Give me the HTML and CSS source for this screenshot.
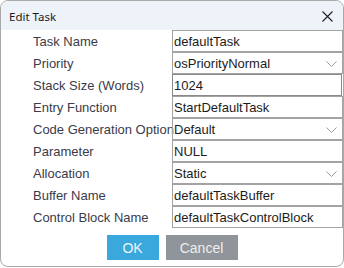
FILE: index.html
```html
<!DOCTYPE html>
<html lang="en">

<head>
    <meta charset="utf-8">
    <meta name="viewport" content="width=device-width, initial-scale=1.0">
    <title>Edit Task</title>
    <link rel="stylesheet" href="styles.css">
</head>

<body>
    <div class="dialog">
        <div class="titlebar">
            <span class="title">Edit Task</span>
            <span class="close">
                <svg width="11" height="11" viewBox="0 0 11 11">
                    <path d="M0.5 0.5 L10.5 10.5 M10.5 0.5 L0.5 10.5" stroke="#1f1f1f" stroke-width="1.1" fill="none"/>
                </svg>
            </span>
        </div>

        <div class="form">
            <span class="label">Task Name</span>
            <div class="field">defaultTask</div>

            <span class="label">Priority</span>
            <div class="field select">osPriorityNormal
                <svg class="chev" width="11" height="6" viewBox="0 0 11 6"><path d="M0.5 0.5 L5.5 5.5 L10.5 0.5" stroke="#9a9a9a" fill="none"/></svg>
            </div>

            <span class="label">Stack Size (Words)</span>
            <div class="field number">1024</div>

            <span class="label">Entry Function</span>
            <div class="field">StartDefaultTask</div>

            <span class="label">Code Generation Option</span>
            <div class="field select">Default
                <svg class="chev" width="11" height="6" viewBox="0 0 11 6"><path d="M0.5 0.5 L5.5 5.5 L10.5 0.5" stroke="#9a9a9a" fill="none"/></svg>
            </div>

            <span class="label">Parameter</span>
            <div class="field">NULL</div>

            <span class="label">Allocation</span>
            <div class="field select">Static
                <svg class="chev" width="11" height="6" viewBox="0 0 11 6"><path d="M0.5 0.5 L5.5 5.5 L10.5 0.5" stroke="#9a9a9a" fill="none"/></svg>
            </div>

            <span class="label">Buffer Name</span>
            <div class="field">defaultTaskBuffer</div>

            <span class="label">Control Block Name</span>
            <div class="field">defaultTaskControlBlock</div>
        </div>

        <div class="buttons">
            <button class="btn ok">OK</button>
            <button class="btn cancel">Cancel</button>
        </div>
    </div>
</body>

</html>
```

FILE: styles.css
```css
* {
    margin: 0;
    box-sizing: border-box;
}

body {
    background: #ffffff;
    font-family: 'Liberation Sans', Arial, sans-serif;
}

.dialog {
    width: 344px;
    height: 267px;
    border: 1px solid #a9a9a9;
    border-radius: 8px;
    overflow: hidden;
    background: #ffffff;
}

.titlebar {
    height: 29px;
    background: #eef2f9;
    display: flex;
    align-items: center;
    justify-content: space-between;
    padding: 0 10px 0 8px;
}

.title {
    font-family: 'Noto Sans', sans-serif;
    font-size: 11.5px;
    color: #1a1a1a;
    padding-top: 1px;
}

.close {
    display: flex;
    margin-top: 1px;
}

.form {
    display: grid;
    grid-template-columns: 171px 171px;
    grid-auto-rows: 22px;
}

.label {
    font-size: 13px;
    color: #3b3b4a;
    padding-left: 32px;
    display: flex;
    align-items: center;
    white-space: nowrap;
}

.field {
    position: relative;
    border: 1px solid #a3a3a3;
    font-size: 13px;
    color: #1c1c1c;
    padding-left: 1px;
    display: flex;
    align-items: center;
}

.number {
    border-color: #8a8a8a;
    margin-right: 1px;
}

.chev {
    position: absolute;
    right: 5px;
    top: 8px;
}

.buttons {
    display: flex;
    justify-content: center;
    gap: 7px;
    margin-top: 7px;
}

.btn {
    height: 25px;
    border: 0;
    font-family: 'Liberation Sans', Arial, sans-serif;
    font-size: 14px;
    color: #eef6fb;
}

.ok {
    width: 52px;
    background: #3aa8dc;
}

.cancel {
    width: 72px;
    background: #8f959b;
    color: #eeeeee;
}
```
